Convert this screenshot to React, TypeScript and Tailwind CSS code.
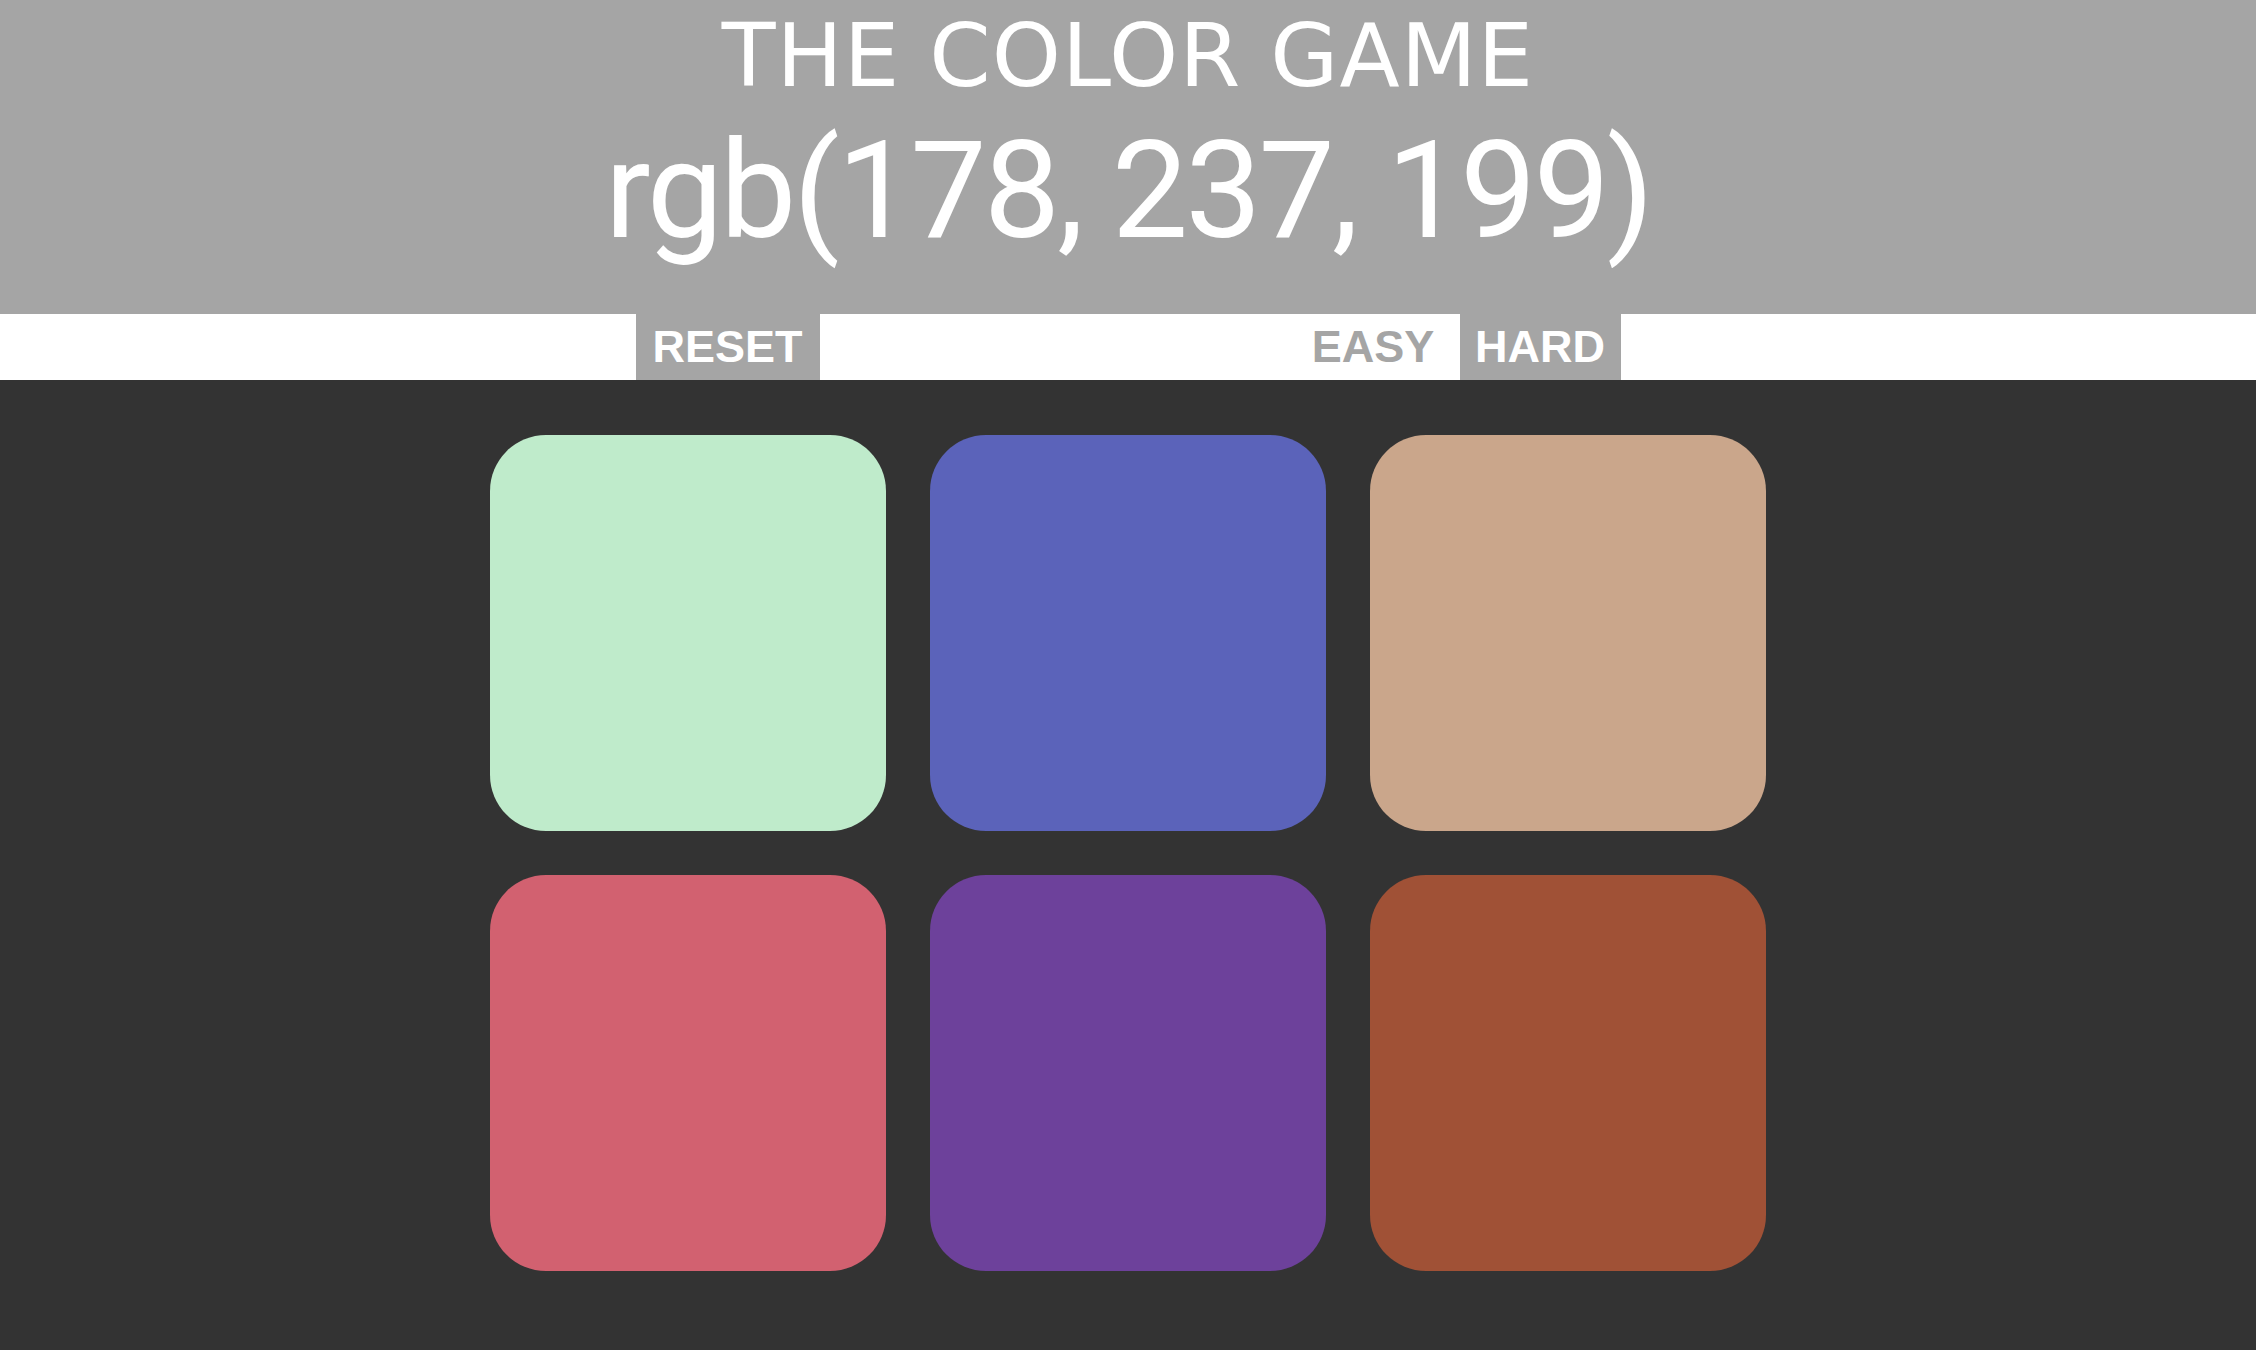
const squares = ["#bfebcb", "#5b63ba", "#caa68b", "#d26170", "#6d419b", "#a05136"];

const gray = "#a5a5a5";

export default function App() {
  return (
    <div className="min-h-screen bg-[#333333]">
      <header className="h-[314px] bg-[#a5a5a5] pt-[12px] text-center text-white">
        <h1 className="font-['DejaVu_Sans',sans-serif] text-[88px] leading-[88px] font-normal tracking-[1px]">
          THE COLOR GAME
        </h1>
        <div className="mt-[23px] font-['Roboto',sans-serif] text-[136px] leading-[136px] tracking-[-3px]">
          rgb(178, 237, 199)
        </div>
      </header>

      <div className="flex h-[66px] justify-center bg-white font-['Liberation_Sans',Arial,sans-serif] text-[45px] font-bold leading-[66px]">
        <button className="w-[184px] text-center text-white" style={{ backgroundColor: gray }}>
          RESET
        </button>
        <span className="w-[479px]" />
        <button className="w-[149px] bg-white text-center text-[#a5a5a5]">EASY</button>
        <span className="w-[12px]" />
        <button className="w-[161px] text-center text-white" style={{ backgroundColor: gray }}>
          HARD
        </button>
      </div>

      <div className="mx-auto grid w-[1276px] grid-cols-3 gap-[44px] pt-[55px] pb-[60px]">
        {squares.map((c) => (
          <div key={c} className="h-[396px] w-[396px] rounded-[56px]" style={{ backgroundColor: c }} />
        ))}
      </div>
    </div>
  );
}
